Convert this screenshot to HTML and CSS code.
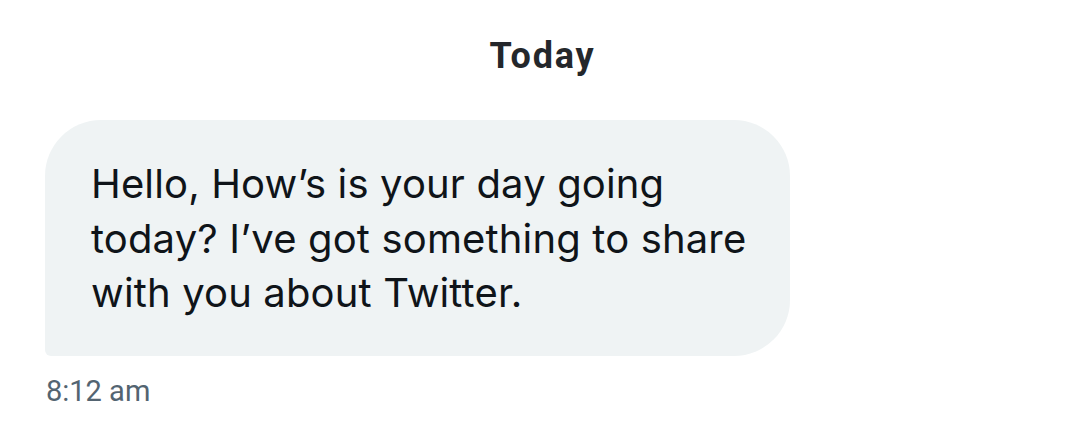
FILE: index.html
```html
<!DOCTYPE html>
<html>
<head>
<meta charset="utf-8">
<link rel="stylesheet" href="styles.css">
</head>
<body>
<div class="chat">
  <div class="day">Today</div>
  <div class="msg">
    <div class="bubble">Hello, How’s is your day going<br>today? I’ve got something to share<br>with you about Twitter.</div>
    <div class="time">8:12 am</div>
  </div>
</div>
</body>
</html>
```
FILE: styles.css
```css
html, body {
  margin: 0;
  padding: 0;
  background: #ffffff;
}
.chat {
  width: 1080px;
  height: 448px;
  display: flex;
  flex-direction: column;
  padding-top: 34px;
  box-sizing: border-box;
}
.day {
  text-align: center;
  font-family: Roboto, "Liberation Sans", sans-serif;
  font-weight: 700;
  font-size: 36px;
  letter-spacing: 1.8px;
  line-height: 44px;
  color: #24272b;
  padding-left: 5px;
}
.msg {
  margin-top: 42px;
  padding-left: 45px;
  display: flex;
  flex-direction: column;
  align-items: flex-start;
}
.bubble {
  width: 745px;
  height: 236px;
  box-sizing: border-box;
  background: #eff3f4;
  border-radius: 56px 56px 56px 6px;
  padding: 37px 0 0 46px;
  font-family: Inter, "Noto Sans", sans-serif;
  font-size: 40px;
  letter-spacing: 0.15px;
  line-height: 54.5px;
  color: #0f1419;
}
.time {
  margin-top: 16px;
  margin-left: 1px;
  font-family: Roboto, "Liberation Sans", sans-serif;
  font-size: 29px;
  line-height: 38px;
  color: #536471;
}
```
